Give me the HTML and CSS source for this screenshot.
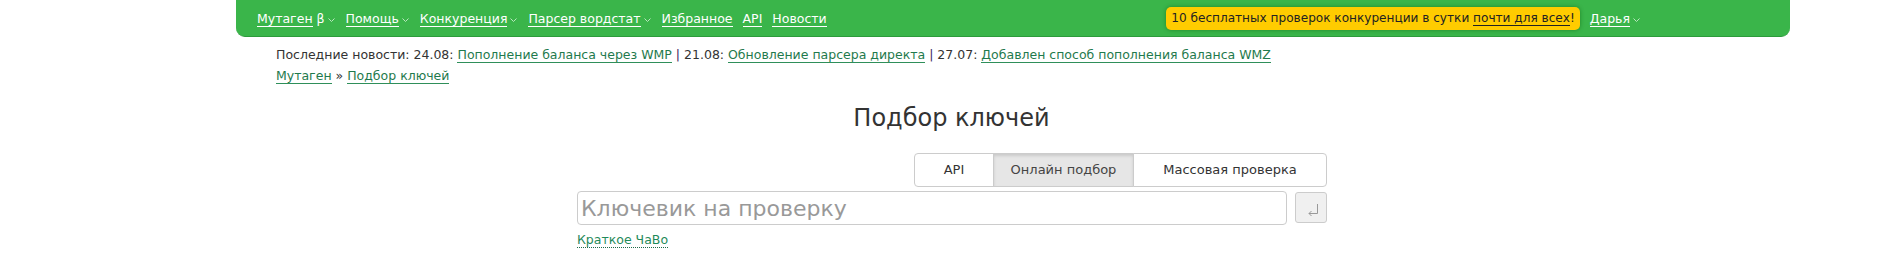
FILE: index.html
```html
<!DOCTYPE html>
<html lang="ru">
<head>
  <meta charset="UTF-8">
  <title>Подбор ключей</title>
  <link rel="stylesheet" href="styles.css">
</head>
<body>
  <div class="topbar">
    <div class="menu">
      <a href="#">Мутаген</a><span class="beta">β</span><svg class="arr" width="7" height="5" viewBox="0 0 7 5"><path d="M0.5 0.5 L3.5 3.5 L6.5 0.5" fill="none" stroke="#b9e6be" stroke-width="1"/></svg>
      <a href="#">Помощь</a><svg class="arr" width="7" height="5" viewBox="0 0 7 5"><path d="M0.5 0.5 L3.5 3.5 L6.5 0.5" fill="none" stroke="#b9e6be" stroke-width="1"/></svg>
      <a href="#">Конкуренция</a><svg class="arr" width="7" height="5" viewBox="0 0 7 5"><path d="M0.5 0.5 L3.5 3.5 L6.5 0.5" fill="none" stroke="#b9e6be" stroke-width="1"/></svg>
      <a href="#">Парсер вордстат</a><svg class="arr" width="7" height="5" viewBox="0 0 7 5"><path d="M0.5 0.5 L3.5 3.5 L6.5 0.5" fill="none" stroke="#b9e6be" stroke-width="1"/></svg>
      <a href="#">Избранное</a>
      <a href="#">API</a>
      <a href="#">Новости</a>
    </div>
    <div class="right">
      <div class="promo">10 бесплатных проверок конкуренции в сутки <a href="#">почти для всех</a>!</div>
      <a href="#" class="user">Дарья</a><svg class="arr" width="7" height="5" viewBox="0 0 7 5"><path d="M0.5 0.5 L3.5 3.5 L6.5 0.5" fill="none" stroke="#b9e6be" stroke-width="1"/></svg>
    </div>
  </div>

  <div class="news">
    Последние новости: 24.08: <a href="#">Пополнение баланса через WMP</a> <span class="sep">|</span> 21.08: <a href="#">Обновление парсера директа</a> <span class="sep">|</span> 27.07: <a href="#">Добавлен способ пополнения баланса WMZ</a>
  </div>
  <div class="crumbs">
    <a href="#">Мутаген</a> » <a href="#">Подбор ключей</a>
  </div>

  <h1>Подбор ключей</h1>

  <div class="tool">
    <div class="tabs">
      <a href="#" class="tab tab-api">API</a>
      <a href="#" class="tab tab-online active">Онлайн подбор</a>
      <a href="#" class="tab tab-mass">Массовая проверка</a>
    </div>
    <div class="search">
      <input type="text" placeholder="Ключевик на проверку">
      <button class="go">
        <svg width="12" height="14" viewBox="0 0 12 14"><path d="M10.5 1 V10.5 H2 M4.5 8 L2 10.5 L4.5 13" fill="none" stroke="#999" stroke-width="1"/></svg>
      </button>
    </div>
    <a href="#" class="faq">Краткое ЧаВо</a>
  </div>
</body>
</html>
```

FILE: styles.css
```css
body {
  margin: 0;
  font-family: 'DejaVu Sans', Verdana, sans-serif;
  font-size: 12.5px;
  color: #333;
  background: #fff;
}

a {
  color: #1f7a4d;
  text-decoration: none;
  border-bottom: 1px solid #2f8f5a;
}

.topbar {
  margin-left: 236px;
  width: 1554px;
  height: 37px;
  background: #3ab54a;
  border-bottom: 1px solid #2c9b3b;
  border-radius: 0 0 9px 9px;
  display: flex;
  justify-content: space-between;
  align-items: center;
  box-sizing: border-box;
  padding: 0 150px 0 21px;
}

.menu, .right {
  display: flex;
  align-items: center;
  color: #fff;
}

.topbar a {
  color: #fff;
  border-bottom-color: #fff;
  line-height: 15px;
  margin-top: 2px;
}

.beta {
  margin-left: 4px;
  margin-top: 1px;
}

.arr {
  margin: 4px 11px 0 3px;
}

.menu a + a {
  margin-left: 10px;
}

.promo {
  background: #ffcc00;
  color: #222;
  font-size: 12.1px;
  padding: 3px 5px 3px 5px;
  border-radius: 5px;
  box-shadow: 0 0 4px rgba(0, 80, 0, 0.45);
  margin-right: 10px;
  line-height: 17px;
}

.promo a {
  color: #222;
  border-bottom-color: #222;
  margin-top: 0;
}

.right .arr {
  margin-right: 0;
}

.news {
  margin: 7px 0 0 276px;
  line-height: 21px;
}

.sep {
  color: #3a2360;
}

.crumbs {
  margin-left: 276px;
  line-height: 21px;
}

h1 {
  font-weight: normal;
  font-size: 24px;
  text-align: center;
  color: #333;
  margin: 17px 0 0 0;
  line-height: 30px;
}

.tool {
  width: 750px;
  margin: 20px auto 0 auto;
  padding-left: 1px;
}

.tabs {
  display: flex;
  justify-content: flex-end;
}

.tab {
  box-sizing: border-box;
  border: 1px solid #ccc;
  color: #333;
  line-height: 32px;
  font-size: 13px;
  margin-left: -1px;
  background: #fff;
  text-align: center;
}

.tab-api {
  width: 80px;
  margin-left: 0;
  border-radius: 4px 0 0 4px;
}

.tab-online {
  width: 141px;
}

.tab-mass {
  width: 194px;
  border-radius: 0 4px 4px 0;
}

.tab.active {
  background: #e6e6e6;
  box-shadow: inset 0 2px 3px rgba(0, 0, 0, 0.12);
  color: #444;
}

.search {
  display: flex;
  gap: 8px;
  margin-top: 4px;
}

.search input {
  width: 710px;
  height: 34px;
  box-sizing: border-box;
  border: 1px solid #ccc;
  border-radius: 4px;
  font-family: 'DejaVu Sans', Verdana, sans-serif;
  font-size: 22px;
  padding: 0 3px;
  color: #333;
}

.search input::placeholder {
  color: #999;
}

.go {
  width: 32px;
  height: 31px;
  margin-top: 1px;
  border: 1px solid #ccc;
  border-radius: 3px;
  background: #f0f0f0;
  display: flex;
  align-items: center;
  justify-content: center;
  padding: 4px 0 0 4px;
}

.faq {
  display: inline-block;
  margin-top: 7px;
  color: #1f8a5a;
  border-bottom: 1px dotted #1f6a4a;
  line-height: 15px;
}
```
